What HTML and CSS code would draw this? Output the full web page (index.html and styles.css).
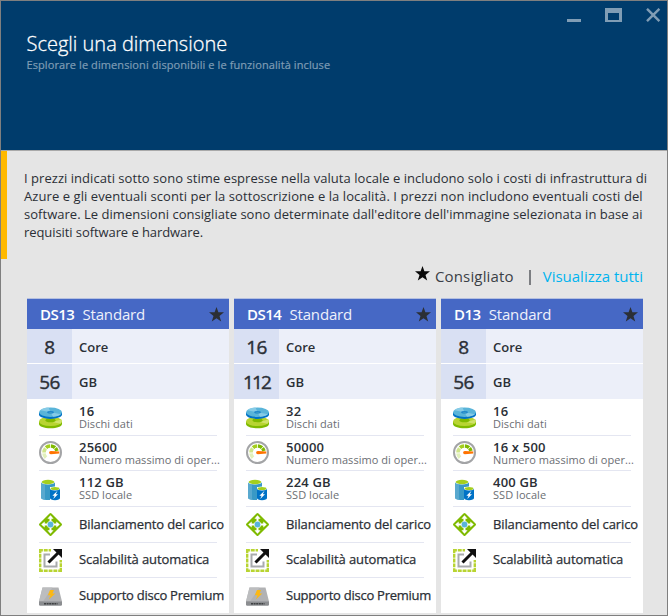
FILE: index.html
```
<!DOCTYPE html>
<html lang="it">
<head>
<meta charset="utf-8">
<title>Scegli una dimensione</title>
<link rel="stylesheet" href="styles.css">
</head>
<body>
<svg class="defs" aria-hidden="true">
  <symbol id="star" viewBox="0 0 15 15"><path d="M7.5 0 9.4 5.3H15L10.5 8.9 12.2 14.6 7.5 11.2 2.8 14.6 4.5 8.9 0 5.3H5.6Z"/></symbol>
  <symbol id="disks" viewBox="0 0 23 23">
    <path d="M0 15.4V18c0 2.400 5 4.300 11.500 4.300S23 20.400 23 18v-2.600Z" fill="#7fba00"/>
    <ellipse cx="11.500" cy="15.400" rx="11.500" ry="4.700" fill="#b8d432"/>
    <path d="M13 16 22.500 13.500C23.300 15 23 16.500 21.500 17.700Z" fill="#cfe36b"/>
    <ellipse cx="11.500" cy="14.200" rx="5" ry="2" fill="#7fba00"/>
    <path d="M0 6.200v2.400c0 2.500 5 4.300 11.500 4.300S23 11.100 23 8.600V6.200Z" fill="#0072c6"/>
    <ellipse cx="11.500" cy="6.200" rx="11.500" ry="4.700" fill="#59b4d9"/>
    <path d="M11.500 6.200 1.200 4.200C3 2.600 6 1.700 9.500 1.600ZM11.500 6.200 22 8.200C20.500 9.600 17.500 10.600 14 10.800Z" fill="#86cbe6"/>
    <ellipse cx="11.500" cy="6.200" rx="3.400" ry="1.300" fill="#1f86cc"/>
    <ellipse cx="11.500" cy="6.700" rx="1.800" ry=".7" fill="#3999c6"/>
  </symbol>
  <symbol id="gauge" viewBox="0 0 23 23">
    <circle cx="11.500" cy="11.500" r="10.500" fill="#fff" stroke="#a3a4a6" stroke-width="2"/>
    <g fill="none" stroke-width="3.600">
      <path d="M7 16.600A6.500 6.500 0 0 1 5 12.300" stroke="#e1f0bb"/>
      <path d="M5 11.500A6.500 6.500 0 0 1 6.500 7.400" stroke="#cfe58a"/>
      <path d="M7 6.700A6.500 6.500 0 0 1 11.200 5" stroke="#a4cf1e"/>
      <path d="M12 5A6.500 6.500 0 0 1 16 6.700" stroke="#7fba00"/>
      <path d="M16.500 7.200A6.500 6.500 0 0 1 17.900 10" stroke="#7fba00"/>
    </g>
    <path d="M11.800 9.900 20.300 10.600v2l-8.500.7a1.700 1.700 0 0 1 0-3.400Z" fill="#ff7300"/>
  </symbol>
  <symbol id="ssd" viewBox="0 0 23 23">
    <path d="M2 4v15.500C2 21 4.500 22 8.500 22H11V9h5V4Z" fill="#3999c6"/>
    <path d="M2 4v15.500c0 1.200 1.500 2 4 2.300V4Z" fill="#59a9cf"/>
    <ellipse cx="9" cy="4" rx="7" ry="2.600" fill="#fff"/>
    <ellipse cx="9" cy="4" rx="6.300" ry="2.200" fill="#a4cf1e"/>
    <path d="M11 10.500V20c0 1.400 2 2.200 5 2.200s5-.8 5-2.200v-9.500Z" fill="#0072c6"/>
    <ellipse cx="16" cy="10.500" rx="5" ry="1.900" fill="#fff"/>
    <ellipse cx="16" cy="10.500" rx="4.400" ry="1.500" fill="#a4cf1e"/>
    <path d="M18.500 12.800 13.400 17.800h2.200l-1.400 3.200 4.800-4.700h-2.200Z" fill="#fff"/>
  </symbol>
  <symbol id="balance" viewBox="0 0 23 23">
    <path d="M10.500.5q1-1 2 0l10 10q1 1 0 2l-10 10q-1 1-2 0l-10-10q-1-1 0-2Z" fill="#7fba00"/>
    <path d="M11.500 2.200 14.600 5.700H12.500V10.500H17.300V8.400L20.800 11.500 17.300 14.600V12.500H12.500V17.300H14.600L11.500 20.800 8.400 17.300H10.500V12.500H5.700V14.600L2.200 11.500 5.700 8.400V10.500H10.500V5.700H8.400Z" fill="#fff"/>
    <circle cx="11.500" cy="11.500" r="3.500" fill="#fff"/>
    <circle cx="11.500" cy="11.500" r="2.900" fill="#59b4d9"/>
  </symbol>
  <symbol id="scale" viewBox="0 0 23 23">
    <path d="M1.200 0V23M0 21.800H23M21.800 23V11M0 1.200H12" fill="none" stroke="#b8d432" stroke-width="2.400" stroke-dasharray="3.900 .9"/>
    <path d="M11 5.500H5.500V17.500H17.500V12.500" fill="none" stroke="#a9abad" stroke-width="2"/>
    <path d="M9.500 13.500 19.500 3.500" stroke="#111" stroke-width="3"/>
    <path d="M14 0H23V9L20.800 6.800 16.200 2.200Z" fill="#111"/>
  </symbol>
  <symbol id="drive" viewBox="0 0 23 23">
    <path d="M3.500 2.500h16L23 16.500H0Z" fill="#b1b2b4"/>
    <path d="M3.500 2.500h10L4 16.500H0Z" fill="#bcbdbf"/>
    <path d="M0 16.300H23V19.500q0 1.200-1.200 1.200H1.200Q0 20.700 0 19.500Z" fill="#8b8d90"/>
    <path d="M5 18.700H18.500" stroke="#3e4042" stroke-width="1.500" stroke-dasharray="2 .6"/>
    <path d="M11 5h4l-1.500 3.600h2.800L9.800 14.500l1.700-4.300H8.800Z" fill="#fcb813"/>
  </symbol>
</svg>

<div class="blade">
  <header class="top">
    <div class="controls">
      <svg width="94" height="15" viewBox="0 0 94 15">
        <path d="M0 11h14v3H0Z"/>
        <path fill-rule="evenodd" d="M38 0h17v14H38ZM41 5v7h11V5Z"/>
        <path d="M80 .8 92.400 13.200M92.400 .8 80 13.200" class="cross"/>
      </svg>
    </div>
    <h1>Scegli una dimensione</h1>
    <p>Esplorare le dimensioni disponibili e le funzionalità incluse</p>
  </header>

  <section class="notice">
    <p><span class="l1">I prezzi indicati sotto sono stime espresse nella valuta locale e includono solo i costi di infrastruttura di</span><br>
    <span class="l2">Azure e gli eventuali sconti per la sottoscrizione e la località. I prezzi non includono eventuali costi del</span><br>
    <span class="l3">software. Le dimensioni consigliate sono determinate dall'editore dell'immagine selezionata in base ai</span><br>
    <span class="l4">requisiti software e hardware.</span></p>
  </section>

  <div class="legend">
    <svg class="star"><use href="#star"/></svg>
    <span class="rec">Consigliato</span><i class="bar"></i><a class="all">Visualizza tutti</a>
  </div>

  <main class="cards">
    <article class="card">
      <h2><b>DS13</b><span>Standard</span><svg class="star"><use href="#star"/></svg></h2>
      <div class="spec"><b>8</b><span>Core</span></div>
      <div class="spec gb"><b>56</b><span>GB</span></div>
      <ul>
        <li><svg><use href="#disks"/></svg><div><b>16</b><small>Dischi dati</small></div></li>
        <li><svg><use href="#gauge"/></svg><div><b>25600</b><small>Numero massimo di oper...</small></div></li>
        <li><svg><use href="#ssd"/></svg><div><b>112 GB</b><small>SSD locale</small></div></li>
        <li><svg><use href="#balance"/></svg><span class="bil">Bilanciamento del carico</span></li>
        <li><svg><use href="#scale"/></svg><span class="sca">Scalabilità automatica</span></li>
        <li><svg><use href="#drive"/></svg><span class="sup">Supporto disco Premium</span></li>
      </ul>
    </article>
    <article class="card">
      <h2><b>DS14</b><span>Standard</span><svg class="star"><use href="#star"/></svg></h2>
      <div class="spec"><b>16</b><span>Core</span></div>
      <div class="spec gb"><b class="tight">112</b><span>GB</span></div>
      <ul>
        <li><svg><use href="#disks"/></svg><div><b>32</b><small>Dischi dati</small></div></li>
        <li><svg><use href="#gauge"/></svg><div><b>50000</b><small>Numero massimo di oper...</small></div></li>
        <li><svg><use href="#ssd"/></svg><div><b>224 GB</b><small>SSD locale</small></div></li>
        <li><svg><use href="#balance"/></svg><span class="bil">Bilanciamento del carico</span></li>
        <li><svg><use href="#scale"/></svg><span class="sca">Scalabilità automatica</span></li>
        <li><svg><use href="#drive"/></svg><span class="sup">Supporto disco Premium</span></li>
      </ul>
    </article>
    <article class="card">
      <h2><b>D13</b><span>Standard</span><svg class="star"><use href="#star"/></svg></h2>
      <div class="spec"><b>8</b><span>Core</span></div>
      <div class="spec gb"><b>56</b><span>GB</span></div>
      <ul>
        <li><svg><use href="#disks"/></svg><div><b>16</b><small>Dischi dati</small></div></li>
        <li><svg><use href="#gauge"/></svg><div><b>16 x 500</b><small>Numero massimo di oper...</small></div></li>
        <li><svg><use href="#ssd"/></svg><div><b>400 GB</b><small>SSD locale</small></div></li>
        <li><svg><use href="#balance"/></svg><span class="bil">Bilanciamento del carico</span></li>
        <li><svg><use href="#scale"/></svg><span class="sca">Scalabilità automatica</span></li>
      </ul>
    </article>
  </main>
</div>
</body>
</html>
```
FILE: styles.css
```
* { box-sizing: border-box; margin: 0; padding: 0; }
body {
  font-family: "Open Sans", "Noto Sans", sans-serif;
  color: #2b2f36;
  overflow: hidden;
}
.defs { display: none; }
.blade {
  width: 668px;
  height: 616px;
  border: 1px solid #7f7f7f;
  background: #e5e5e5;
  overflow: hidden;
}

.top {
  height: 150px;
  background: #003c6c;
  border-bottom: 1px solid #a9a9a9;
  padding: 7px 6px 0 25.5px;
  color: #fff;
}
.controls { display: flex; justify-content: flex-end; height: 15px; }
.controls svg { fill: #809db5; }
.cross { stroke: #809db5; stroke-width: 2.4; fill: none; }
.top h1 {
  font-size: 20px;
  font-weight: 300;
  line-height: 28px;
  margin-top: 7px;
  -webkit-text-stroke: .3px #fff;
}
.top p {
  font-size: 11px;
  line-height: 16px;
  margin-top: -1px;
  letter-spacing: .09px;
  color: #7f9db5;
  -webkit-text-stroke: .2px #7f9db5;
}

.notice {
  height: 108px;
  border-left: 6px solid #ffb900;
  padding: 18px 0 0 17px;
  font-size: 13px;
  line-height: 18px;
  white-space: nowrap;
}
.l1 { letter-spacing: .04px; }
.l2 { letter-spacing: .075px; }
.l3 { letter-spacing: .03px; }
.l4 { letter-spacing: -.08px; }

.star { width: 15px; height: 15px; fill: #2b2f36; }
.legend {
  display: flex;
  justify-content: flex-end;
  height: 39px;
  padding: 7px 24px 0 0;
  font-size: 15px;
  line-height: 21px;
}
.legend .star { fill: #0a0a0a; margin-right: 5px; }
.rec { letter-spacing: .15px; color: #3b3f46; }
.bar { width: 2px; height: 15px; margin: 4px 12px 0 15px; background: #7c7e82; }
.all { color: #00b4ef; }

.cards { display: flex; gap: 5px; padding-left: 26px; height: 316px; }
.card { width: 202px; height: 315px; background: #fff; }
.card h2 {
  display: flex;
  align-items: center;
  height: 31px;
  padding: 0 5px 0 13px;
  background: #4668c5;
  border-top: 1px solid #b5c0e0;
  color: #fff;
  font-size: 15px;
  font-weight: 400;
  line-height: 20px;
}
.card h2 b { font-weight: 600; letter-spacing: -.5px; margin: -1px 8px 0 0; }
.card h2 span { letter-spacing: -.15px; flex: 1; margin-top: -1px; color: #eef1fb; }
.spec {
  display: flex;
  height: 35px;
  line-height: 36px;
  background: #eceff9;
  border-bottom: 1px solid #fff;
}
.spec b {
  width: 45px;
  background: #d9e0f3;
  text-align: center;
  font-size: 19px;
  font-weight: 400;
  letter-spacing: -.5px;
  -webkit-text-stroke: .4px #2b2f36;
}
.spec .tight { letter-spacing: -1.8px; }
.spec span { padding-left: 7px; font-size: 13px; font-weight: 600; }
.gb { border-bottom: 0; }

.card ul { list-style: none; padding-left: 12px; }
.card li {
  display: flex;
  align-items: center;
  width: 178px;
  height: 35px;
  border-bottom: 1px solid #e4e6f1;
  white-space: nowrap;
  font-size: 13px;
}
.card li:nth-child(1) { height: 37px; padding-top: 1px; }
.card li:nth-child(2) { padding-bottom: 1px; }
.card li:nth-child(2) div { margin-bottom: -2px; }
.card li:nth-child(3), .card li:nth-child(4) { height: 36px; }
.card li:nth-child(3) { padding-top: 1px; }
.card li:nth-child(3) div { margin-top: -2px; }
.card li:nth-child(6) { border-bottom: 0; height: 36px; }
.card li svg { width: 23px; height: 23px; flex: none; margin-right: 17px; }
.card li b { display: block; font-size: 13px; font-weight: 600; line-height: 12px; letter-spacing: .2px; }
.card li small { display: block; font-size: 11px; font-weight: 400; line-height: 13px; letter-spacing: .05px; color: #6b6e73; }
.card li > span { margin-top: -2px; -webkit-text-stroke: .25px #2b2f36; }
.bil { letter-spacing: -.13px; }
.sca { letter-spacing: -.1px; }
.sup { letter-spacing: -.25px; }
```
